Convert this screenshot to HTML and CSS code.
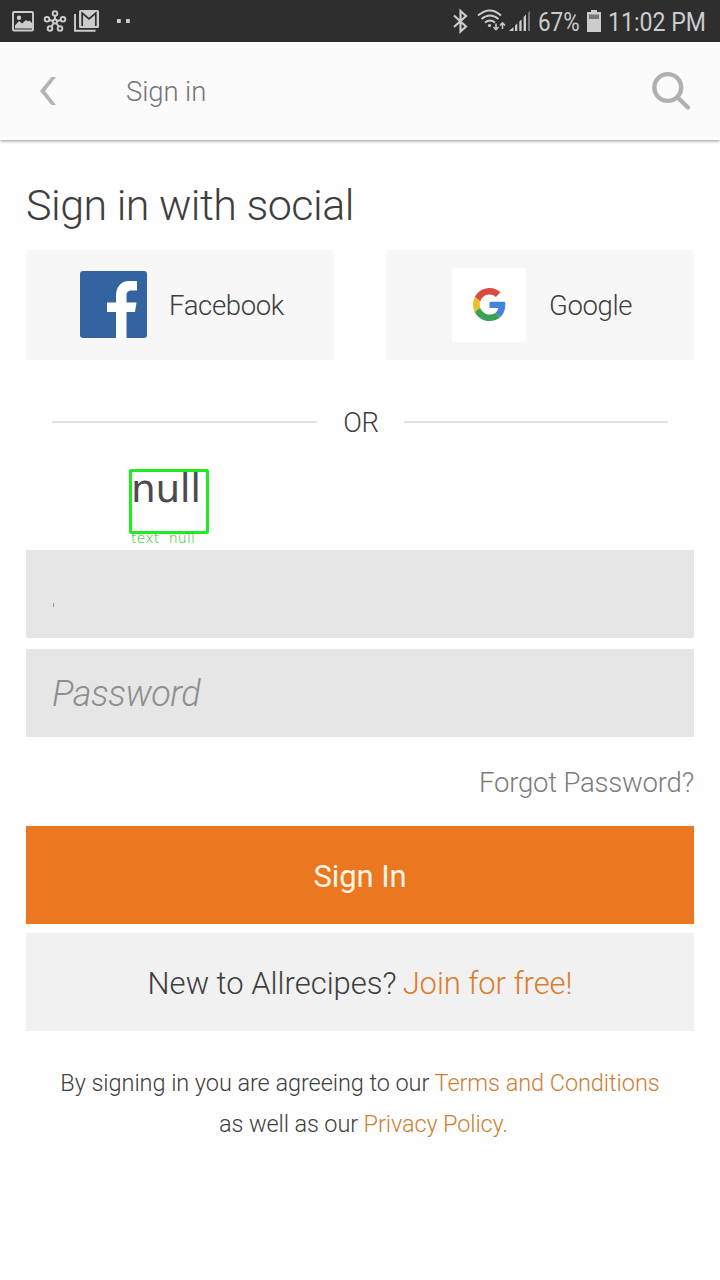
FILE: index.html
```html
<!DOCTYPE html>
<html lang="en">
<head>
<meta charset="utf-8">
<title>Sign in</title>
<link rel="stylesheet" href="styles.css">
</head>
<body>
<div class="status">
  <svg class="status-left" width="140" height="42" viewBox="0 0 140 42" fill="none" stroke="#ccc">
    <rect x="13" y="12" width="20" height="18.500" rx="1" stroke-width="1.900"/>
    <path d="M15 28.500V25.500L19 21l3 2.500 4-3.500 2 1.500 1.500-1 2.500 2.500v5.500z" fill="#ccc" stroke="none"/>
    <circle cx="19" cy="17.800" r="2.200" fill="#ccc" stroke="none"/>
    <path d="M55 21.500V16M55 21.500l8-2M55 21.500l-8-2M55 21.500l-4.500 6M55 21.500l4.500 6" stroke-width="2"/>
    <g fill="#2e2e2e" stroke-width="1.900"><circle cx="55" cy="13.500" r="2.300"/><circle cx="47" cy="19.300" r="2.300"/><circle cx="63" cy="19.300" r="2.300"/><circle cx="50" cy="28.500" r="2.300"/><circle cx="60" cy="28.500" r="2.300"/><circle cx="55" cy="21.500" r="2"/></g>
    <path d="M75 14v16.700h20.500" stroke-width="1.900"/>
    <rect x="79" y="10" width="20" height="18" rx="1.500" fill="#ccc" stroke="none"/>
    <path d="M82.200 26V13l6.800 5.800 6.800-5.800v13" stroke="#2e2e2e" stroke-width="1.700"/>
  <path d="M117 19h3.800v4H117zM126 19h3.800v4H126z" fill="#ccc" stroke="none"/>
  </svg>
  <div class="status-right">
    <svg width="80" height="42" viewBox="450 0 80 42" fill="none" stroke="#ccc">
      <path d="M454 15.500l12 11-5.500 5V11l5.500 5-12 11" stroke-width="2.200"/>
      <path d="M478 15.500q12-10 23 0M481.500 19q8.500-7 17 0M485 22.500q5-4 10 0" stroke-width="1.900"/>
      <circle cx="489.500" cy="25.500" r="1.600" fill="#ccc" stroke="none"/>
      <path d="M496 23.500v6M493.500 27l2.500 2.700 2.500-2.700M502.500 29v-6M500 25.500l2.500-2.700 2.500 2.700" stroke-width="1.500"/>
      <path d="M509 31l4.500-4v4zM515 25.500l2.300-2V31H515zM519.300 21.500l2.300-2V31h-2.300zM523.600 17l2.400-2.500V31h-2.400z" fill="#ccc" stroke="none"/>
      <path d="M528 13l2-2.500V31h-2z" fill="#777" stroke="none"/>
    </svg>
    <span class="pct">67%</span>
    <svg class="battery" width="14" height="22" viewBox="0 0 14 22"><path d="M0 2h4V0h6v2h4v20H0z" fill="#ccc"/><path d="M2 4.500h10v4.500H2z" fill="#777"/></svg>
    <span class="clock">11:02 PM</span>
  </div>
</div>
<header class="header">
  <svg class="back" width="18" height="30" viewBox="0 0 18 30"><path d="M1 15L12.500 1h4.500L6 15l11 14h-4.500z" fill="#b3b3b3"/></svg>
  <span class="title">Sign in</span>
  <svg class="search" width="42" height="42" viewBox="0 0 42 42" fill="none" stroke="#b0b0b0" stroke-width="4.400"><circle cx="17.800" cy="17.500" r="13.400"/><path d="M27.500 27.500l10.500 10" stroke-linecap="round"/></svg>
</header>
<main class="content">
  <h1 class="heading">Sign in with social</h1>
  <div class="social">
    <div class="provider facebook">
      <svg width="67" height="67" viewBox="0 0 67 67"><rect width="67" height="67" rx="3" fill="#3464a0"/><path d="M36 67V41h-9v-9.500h9V25c0-9 5-15 13-15h8v9.500h-5c-4 0-5.500 1.500-5.500 5v7H56.500L55 41h-8.500v26z" fill="#fff"/></svg>
      <span class="fb-label">Facebook</span>
    </div>
    <div class="provider google">
      <span class="tile"><svg width="33" height="33" viewBox="0 0 48 48"><path fill="#d94b3d" d="M24 9.500c3.540 0 6.710 1.220 9.210 3.600l6.850-6.850C35.900 2.380 30.470 0 24 0 14.620 0 6.510 5.380 2.560 13.220l7.980 6.190C12.430 13.720 17.740 9.500 24 9.500z"/><path fill="#4683df" d="M46.980 24.550c0-1.570-.15-3.090-.38-4.550H24v9.020h12.940c-.58 2.960-2.260 5.480-4.780 7.180l7.730 6c4.510-4.180 7.090-10.360 7.090-17.650z"/><path fill="#edbd2c" d="M10.530 28.590A14.500 14.500 0 0 1 9.770 24c0-1.600.27-3.140.76-4.590l-7.980-6.190A23.940 23.940 0 0 0 0 24c0 3.880.92 7.540 2.560 10.780z"/><path fill="#3ca253" d="M24 48c6.480 0 11.930-2.130 15.890-5.810l-7.730-6c-2.150 1.450-4.920 2.300-8.160 2.300-6.260 0-11.570-4.220-13.470-9.910l-7.980 6.190C6.510 42.620 14.620 48 24 48z"/></svg></span>
      <span class="gg-label">Google</span>
    </div>
  </div>
  <div class="divider"><i class="line"></i><span class="or">OR</span><i class="line"></i></div>
  <div class="label-row"><div class="marker"><span class="null">null</span><span class="caption">text&nbsp; null</span></div></div>
  <div class="field email"></div>
  <div class="field password"><span class="placeholder">Password</span></div>
  <div class="forgot"><span class="forgot-text">Forgot Password?</span></div>
  <div class="submit"><span class="submit-text">Sign In</span></div>
  <div class="join"><span class="join-q">New to Allrecipes?</span><span class="join-a">Join for free!</span></div>
  <div class="legal">
    <div><span class="legal-1">By signing in you are agreeing to our <span class="link">Terms and Conditions</span></span></div>
    <div class="legal-second"><span class="legal-2">as well as our <span class="link">Privacy Policy.</span></span></div>
  </div>
</main>
</body>
</html>
```
FILE: styles.css
```css
* { box-sizing: border-box; }
body { margin: 0; width: 720px; height: 1280px; overflow: hidden; background: #fefefe; color: #3e3e3e; font-family: Roboto, sans-serif; font-weight: 300; }
svg { display: block; flex: none; }
span { white-space: nowrap; }
.status { height: 42px; background: #2e2e2e; display: flex; justify-content: space-between; color: #ccc; font-weight: 400; }
.status-right { display: flex; align-items: center; padding-right: 14px; font-size: 25.500px; line-height: 42px; }
.pct { width: 42px; margin-left: 8px; padding-top: 2px; transform: scaleX(.88); transform-origin: left; }
.battery { margin-left: 7px; }
.clock { width: 98px; margin-left: 7px; padding-top: 2px; transform: scaleX(.905); transform-origin: left; }
.header { height: 98px; background: #fbfbfb; box-shadow: 0 1px 3px rgba(0,0,0,.42); display: flex; align-items: center; padding: 0 28px 0 39px; }
.title { margin-left: 69px; font-size: 27.500px; letter-spacing: -.1px; color: #757575; padding-top: 1px; }
.search { margin-left: auto; }
.content { padding: 0 26px; }
.heading { margin: 0; height: 110px; padding-top: 40px; font-size: 43px; line-height: 50px; font-weight: 300; letter-spacing: -.5px; white-space: nowrap; }
.social { display: grid; grid-template-columns: 308px 308px; gap: 52px; }
.provider { height: 110px; background: #f7f7f7; display: flex; align-items: center; font-size: 27.500px; letter-spacing: -.35px; }
.facebook { padding-left: 54px; gap: 22px; }
.facebook svg { margin-bottom: 2px; }
.google { padding-left: 66px; gap: 23px; }
.tile { width: 74px; height: 74px; border-radius: 4px; background: #fff; display: grid; place-items: center; }
.tile svg { margin-bottom: 1px; }
.divider { height: 110px; padding: 14px 26px 0; display: flex; align-items: center; justify-content: space-between; font-size: 27.500px; }
.or { letter-spacing: -.4px; padding-left: 1px; }
.line { width: 265px; height: 2px; background: #e3e3e3; }
.line:last-child { width: 264px; }
.label-row { height: 80px; padding-left: 103px; }
.marker { position: relative; top: -1px; width: 80px; height: 65px; border: 3px solid #1fec1f; border-radius: 2px; color: #4b4b4f; font-family: "DejaVu Sans", sans-serif; }
.null { position: absolute; left: -1px; top: -4px; font-size: 39px; line-height: 42px; font-weight: 400; letter-spacing: -.3px; }
.caption { position: absolute; left: -1px; top: 58px; font-size: 14px; line-height: 16px; color: #22bd22; font-weight: 200; letter-spacing: .2px; }
.field { height: 88px; background: #e6e6e6; }
.email { padding: 53px 0 0 27px; }
.email::before { content: ""; display: block; width: 1px; height: 4px; background: #999; }
.password { margin-top: 11px; padding: 2px 0 0 26px; display: flex; align-items: center; font-size: 36px; letter-spacing: -.5px; font-style: italic; color: #8e8e8e; }
.forgot { height: 89px; display: flex; align-items: center; justify-content: flex-end; font-size: 27.500px; letter-spacing: -.2px; color: #7c7c7c; padding-top: 2px; }
.submit { height: 98px; background: #eb7720; color: #fff5e3; font-size: 31px; font-weight: 400; letter-spacing: -.1px; display: flex; align-items: center; justify-content: center; padding-top: 2px; }
.join { margin-top: 9px; height: 98px; background: #f1f1f1; font-size: 31px; display: flex; align-items: center; justify-content: center; gap: 6px; padding-top: 2px; }
.join-a { color: #dc7d2d; letter-spacing: -.1px; }
.legal { padding-top: 32px; font-size: 23.500px; line-height: 41px; letter-spacing: -.06px; text-align: center; }
.legal-second { padding-left: 7px; letter-spacing: -.12px; }
.link { color: #cd7f35; }
```
